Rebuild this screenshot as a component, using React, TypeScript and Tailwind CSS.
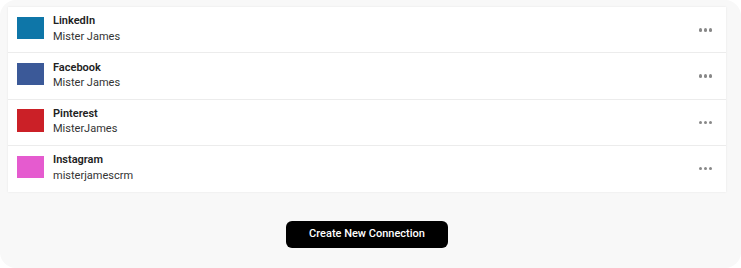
import React from "react";

const rows = [
  { name: "LinkedIn", handle: "Mister James", color: "#0e76a8" },
  { name: "Facebook", handle: "Mister James", color: "#3b5998" },
  { name: "Pinterest", handle: "MisterJames", color: "#cb2027" },
  { name: "Instagram", handle: "misterjamescrm", color: "#e55bcf" },
];

export default function App() {
  return (
    <div className="w-[741px] h-[268px] bg-white" style={{ fontFamily: "Roboto, 'Liberation Sans', sans-serif" }}>
      <div className="w-[741px] h-[268px] rounded-2xl bg-[#f8f8f8] pt-[7px] pl-2 pr-[15px]">
        <div className="w-[718px] bg-white shadow-[0_0_2px_rgba(0,0,0,0.08)]">
          {rows.map((r, i) => (
            <div
              key={r.name}
              className={`flex items-start h-[46.3px] pl-[9px] pr-[14px] ${i < rows.length - 1 ? "border-b border-[#ececec]" : ""}`}
            >
              <div className="w-[27px] h-[22.5px] mt-[9.7px] shrink-0" style={{ backgroundColor: r.color }} />
              <div className="ml-[9px] mt-[6.4px] flex flex-col">
                <span className="text-[11px] leading-[15.4px] font-semibold text-[#222]">{r.name}</span>
                <span className="text-[11px] leading-[15.4px] text-[#333]">{r.handle}</span>
              </div>
              <div className="ml-auto mt-[21px] flex gap-[1.5px]">
                <span className="w-[3.5px] h-[3.5px] rounded-full bg-[#888]" />
                <span className="w-[3.5px] h-[3.5px] rounded-full bg-[#888]" />
                <span className="w-[3.5px] h-[3.5px] rounded-full bg-[#888]" />
              </div>
            </div>
          ))}
        </div>
        <div className="w-[718px] flex justify-center mt-[29px]">
          <button className="w-[162px] h-[27px] rounded-[6px] bg-black text-white text-[11px] font-medium">
            Create New Connection
          </button>
        </div>
      </div>
    </div>
  );
}
